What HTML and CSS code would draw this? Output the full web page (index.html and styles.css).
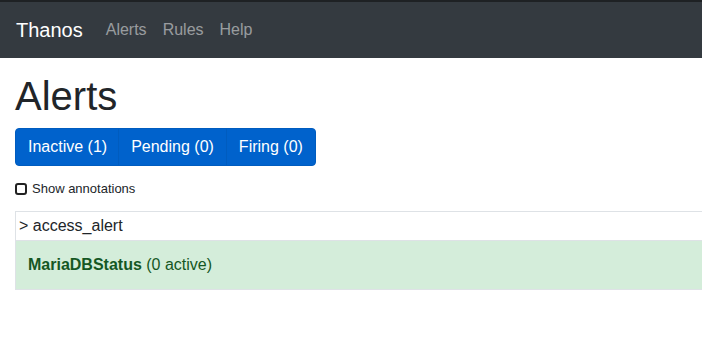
FILE: index.html
```html
<!DOCTYPE html>
<html lang="en">
<head>
  <meta charset="UTF-8" />
  <title>Thanos | Alerts</title>
  <link rel="stylesheet" href="styles.css">
</head>
<body>

  <!-- top navigation -->
  <nav class="navbar">
    <a class="brand" href="#">Thanos</a>
    <a class="nav-link" href="#">Alerts</a>
    <a class="nav-link" href="#">Rules</a>
    <a class="nav-link" href="#">Help</a>
  </nav>

  <div class="page">
    <h1>Alerts</h1>

    <div class="btn-group">
      <button class="btn">Inactive (1)</button>
      <button class="btn">Pending (0)</button>
      <button class="btn">Firing (0)</button>
    </div>

    <label class="toggle">
      <input type="checkbox" class="check">
      <span>Show annotations</span>
    </label>

    <table class="alerts">
      <tr class="group-row">
        <td>&gt; access_alert</td>
      </tr>
      <tr class="rule-row">
        <td><strong>MariaDBStatus</strong> (0 active)</td>
      </tr>
    </table>
  </div>

</body>
</html>
```
FILE: styles.css
```css
body {
  font-family: "Liberation Sans", Arial, sans-serif;
  font-size: 16px;
  line-height: 1.5;
  color: #212529;
  background-color: #fff;
  margin: 0;
}

.navbar {
  display: flex;
  align-items: center;
  height: 56px;
  padding: 0 16px;
  background-color: #343a40;
  border-top: 2px solid #1e2124;
}

.brand {
  color: #fff;
  font-size: 20px;
  text-decoration: none;
  margin-right: 15px;
}

.nav-link {
  color: rgba(255, 255, 255, 0.5);
  text-decoration: none;
  padding: 0 8px;
}

.page {
  padding: 14px 0 0 15px;
}

h1 {
  font-size: 40px;
  font-weight: 500;
  line-height: 1.2;
  margin: 0 0 8px;
}

.btn-group {
  display: flex;
}

.btn {
  font-family: inherit;
  font-size: 16px;
  line-height: 24px;
  color: #fff;
  background-color: #0062cc;
  border: 1px solid #005cbf;
  padding: 6px 12px;
  margin: 0;
  cursor: pointer;
}

.btn + .btn {
  margin-left: -1px;
}

.btn:first-child {
  padding-right: 11px;
  border-radius: 4px 0 0 4px;
}

.btn:last-child {
  border-radius: 0 4px 4px 0;
}

.toggle {
  display: flex;
  align-items: center;
  gap: 5px;
  font-size: 13px;
  margin: 13px 0 12px;
}

.check {
  appearance: none;
  width: 12px;
  height: 12px;
  margin: 0;
  border: 2px solid #222;
  border-radius: 3px;
}

.alerts {
  width: calc(100% + 20px);
  border-collapse: collapse;
  border: 1px solid #dee2e6;
}

.alerts td {
  border-top: 1px solid #dee2e6;
}

.group-row td {
  padding: 2px 3px;
}

.rule-row td {
  padding: 12px;
  background-color: #d4edda;
  color: #155724;
}
```
